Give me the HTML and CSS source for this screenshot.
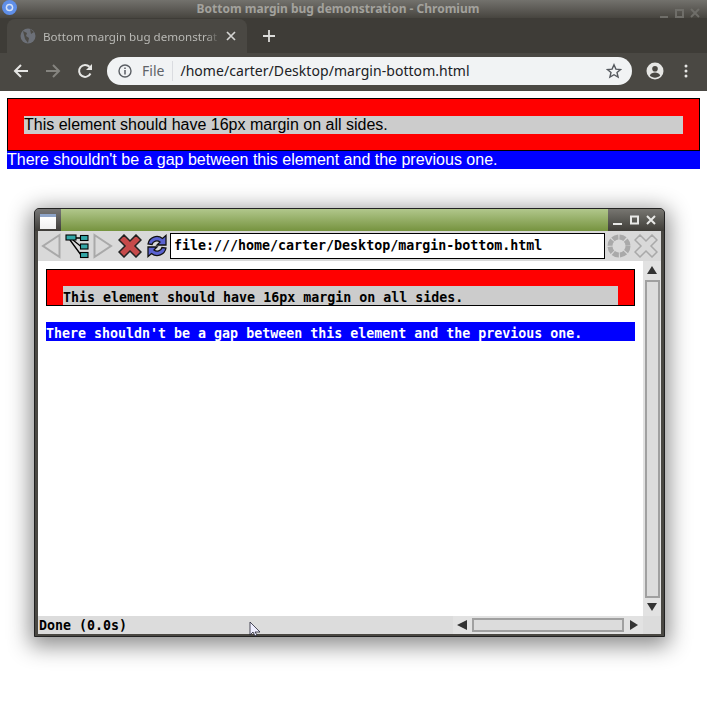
FILE: index.html
```html
<!DOCTYPE html>
<html lang="en">
<head>
<meta charset="utf-8">
<title>Bottom margin bug demonstration - Chromium</title>
<link rel="stylesheet" href="styles.css">
</head>
<body>
<header class="chrome">
  <div class="titlebar">
    <svg class="app-icon" width="18" height="18" viewBox="0 0 18 18"><circle cx="8.500" cy="7.500" r="7.500" fill="#5f8fe8"/><circle cx="8.500" cy="7.500" r="3.800" fill="#d5e2f6"/><circle cx="8.500" cy="7.500" r="2.300" fill="#5f8fe8"/></svg>
    <span class="win-title">Bottom margin bug demonstration - Chromium</span>
    <div class="win-controls">
      <svg width="48" height="12" viewBox="0 0 48 12"><path d="M2 10h8" stroke="#6f6e69" stroke-width="2"/><rect x="18" y="3" width="7" height="7" fill="none" stroke="#6f6e69" stroke-width="2"/><path d="M33 2l8 8M41 2l-8 8" stroke="#6f6e69" stroke-width="2"/></svg>
    </div>
  </div>
  <div class="tabstrip">
    <div class="tab">
      <svg class="globe" width="16" height="16" viewBox="0 0 16 16"><circle cx="8" cy="8" r="7.500" fill="#6c7078"/><path d="M3 3l4 2-1 3 3 2-1 5-3-4zM10 1l4 3-3 2z" fill="#4d4b46"/></svg>
      <span class="tab-label">Bottom margin bug demonstrat</span>
      <svg class="tab-close" width="10" height="10" viewBox="0 0 10 10"><path d="M1 1l8 8M9 1l-8 8" stroke="#d4d4d2" stroke-width="1.700"/></svg>
    </div>
    <svg class="new-tab" width="14" height="14" viewBox="0 0 14 14"><path d="M7 1v12M1 7h12" stroke="#dcdcda" stroke-width="1.800"/></svg>
  </div>
  <div class="toolbar">
    <svg class="nav" width="16" height="16" viewBox="0 0 16 16"><path d="M15 8H2M8 2L2 8l6 6" fill="none" stroke="#e6e6e4" stroke-width="2"/></svg>
    <svg class="nav" width="16" height="16" viewBox="0 0 16 16"><path d="M1 8h13M8 2l6 6-6 6" fill="none" stroke="#85847f" stroke-width="2"/></svg>
    <svg class="nav" width="16" height="16" viewBox="0 0 16 16"><path d="M13.500 10.500A6 6 0 1 1 12.500 3.800" fill="none" stroke="#e6e6e4" stroke-width="2"/><path d="M15 1v6H9z" fill="#e6e6e4"/></svg>
    <div class="omnibox">
      <svg class="info" width="14" height="14" viewBox="0 0 14 14"><circle cx="7" cy="7" r="6" fill="none" stroke="#5a5e63" stroke-width="1.400"/><path d="M7 6v4.500M7 3.500v1.500" stroke="#5a5e63" stroke-width="1.500"/></svg>
      <span class="scheme">File</span>
      <span class="divider"></span>
      <span class="url">/home/carter/Desktop/margin-bottom.html</span>
      <svg class="star" width="16" height="16" viewBox="0 0 16 16"><path d="M8 1.800l1.900 4.300 4.600.4-3.500 3 1.100 4.600L8 11.700l-4.100 2.400L5 9.500l-3.500-3 4.600-.4z" fill="none" stroke="#55595e" stroke-width="1.400"/></svg>
    </div>
    <svg class="avatar" width="18" height="18" viewBox="0 0 18 18"><circle cx="9" cy="9" r="8.500" fill="#e6e6e4"/><circle cx="9" cy="6.800" r="2.800" fill="#4a4843"/><path d="M3.800 13.500c1-2.200 3-3 5.200-3s4.200.8 5.200 3c-1.300 1.400-3.100 2.200-5.200 2.200s-3.900-.8-5.200-2.200z" fill="#4a4843"/></svg>
    <svg class="menu" width="4" height="14" viewBox="0 0 4 14"><circle cx="2" cy="2" r="1.500" fill="#e6e6e4"/><circle cx="2" cy="7" r="1.500" fill="#e6e6e4"/><circle cx="2" cy="12" r="1.500" fill="#e6e6e4"/></svg>
  </div>
</header>

<main class="page">
  <div class="red-box">
    <p class="grey-line">This element should have 16px margin on all sides.</p>
  </div>
  <p class="blue-line">There shouldn't be a gap between this element and the previous one.</p>

  <section class="window">
    <div class="nf-title">
      <div class="nf-icon"><span class="nf-icon-sq"></span></div>
      <div class="nf-green"></div>
      <div class="nf-controls">
        <svg width="50" height="12" viewBox="0 0 50 12"><path d="M5 10h9" stroke="#e8e8e6" stroke-width="2"/><rect x="23" y="2.500" width="7" height="7" fill="none" stroke="#e8e8e6" stroke-width="2"/><path d="M39 2l8 8M47 2l-8 8" stroke="#e8e8e6" stroke-width="2"/></svg>
      </div>
    </div>
    <div class="nf-toolbar">
      <svg class="nf-back" width="20" height="26" viewBox="0 0 20 26"><path d="M18.500 2v22L2 13z" fill="#d9d9d9" stroke="#a9a9a9" stroke-width="2"/></svg>
      <svg class="nf-map" width="24" height="26" viewBox="0 0 24 26"><g stroke="#000" stroke-width="1.300" fill="none"><path d="M8 5h8M8 7l8 6.500M5 7l11 15"/></g><g fill="#34a6a6" stroke="#000" stroke-width="1.100"><rect x="1" y="2" width="10" height="5"/><rect x="15.500" y="2.500" width="7.500" height="5"/><rect x="15.500" y="11" width="7.500" height="5"/><rect x="15.500" y="19.500" width="7.500" height="5"/></g></svg>
      <svg class="nf-fwd" width="20" height="26" viewBox="0 0 20 26"><path d="M1.500 2v22L18 13z" fill="#d9d9d9" stroke="#a9a9a9" stroke-width="2"/></svg>
      <svg class="nf-stop" width="24" height="24" viewBox="0 0 24 24"><path d="M6 1l6 6 6-6 5 5-6 6 6 6-5 5-6-6-6 6-5-5 6-6-6-6z" fill="#c64a4a" stroke="#222" stroke-width="1.500"/></svg>
      <svg class="nf-reload" width="22" height="24" viewBox="0 0 22 24"><path d="M2 10a9 9 0 0 1 14.500-5.500L20 1.500v9.500h-9l3-3a5 5 0 0 0-8 2.500z" fill="#5a62d0" stroke="#111" stroke-width="1.300"/><path d="M20 14a9 9 0 0 1-14.500 5.500L2 22.500V13h9l-3 3a5 5 0 0 0 8-2.500z" fill="#5a62d0" stroke="#111" stroke-width="1.300"/></svg>
      <div class="nf-url">file:///home/carter/Desktop/margin-bottom.html</div>
      <svg class="nf-throbber" width="24" height="24" viewBox="0 0 24 24"><circle cx="12" cy="12" r="9" fill="none" stroke="#a9a9a9" stroke-width="5" stroke-dasharray="6 1.100"/></svg>
      <svg class="nf-close" width="24" height="24" viewBox="0 0 24 24"><path d="M6 1l6 6 6-6 5 5-6 6 6 6-5 5-6-6-6 6-5-5 6-6-6-6z" fill="#d9d9d9" stroke="#a9a9a9" stroke-width="1.500"/></svg>
    </div>
    <div class="nf-middle">
      <div class="nf-view">
        <div class="nf-red">
          <p class="nf-grey">This element should have 16px margin on all sides.</p>
        </div>
        <p class="nf-blue">There shouldn't be a gap between this element and the previous one.</p>
      </div>
      <div class="nf-vscroll">
        <span class="arrow arrow-up"></span>
        <div class="vthumb"></div>
        <span class="arrow arrow-down"></span>
      </div>
    </div>
    <div class="nf-status">
      <span class="status-text">Done (0.0s)</span>
      <div class="nf-hscroll">
        <span class="arrow arrow-left"></span>
        <div class="hthumb"></div>
        <span class="arrow arrow-right"></span>
      </div>
      <div class="corner"></div>
    </div>
    <svg class="cursor" width="13" height="16" viewBox="0 0 13 16"><path d="M1 1v13l3-3 2 4 2-1-2-3h5z" fill="#eef" stroke="#223" stroke-width=".8"/></svg>
  </section>
</main>
</body>
</html>
```

FILE: styles.css
```css
* { box-sizing: border-box; }
html, body { margin: 0; padding: 0; background: #fff; }
body { width: 707px; height: 710px; overflow: hidden; font-family: "Liberation Sans", sans-serif; }
p { margin: 0; }

.chrome { height: 91px; font-family: "Noto Sans", sans-serif; }
.titlebar { height: 18px; display: flex; align-items: center; position: relative; background: linear-gradient(#73726d, #47453f); }
.app-icon { position: absolute; left: 1px; top: 0; }
.win-title { width: 100%; text-align: center; font-size: 12px; font-weight: 700; color: #a3a29d; line-height: 18px; padding-right: 31px; }
.win-controls { position: absolute; right: 1px; top: 2px; height: 14px; }

.tabstrip { height: 35px; background: #3e3c37; display: flex; align-items: center; }
.tab { width: 240px; height: 34px; margin: 1px 0 0 7px; background: #4a4843; border-radius: 8px 8px 0 0; display: flex; align-items: center; padding-left: 13px; }
.globe { flex: none; }
.tab-label { margin-left: 7px; width: 177px; font-size: 11.600px; color: #b9b9b5; white-space: nowrap; -webkit-mask-image: linear-gradient(90deg, #000 92%, transparent); mask-image: linear-gradient(90deg, #000 92%, transparent); }
.tab-close { margin-left: 6px; flex: none; }
.new-tab { margin-left: 15px; }

.toolbar { height: 38px; background: #4a4843; display: flex; align-items: center; padding: 0 0 0 13px; }
.nav { flex: none; margin-right: 16px; margin-top: -3px; }
.omnibox { width: 525px; height: 28px; margin-left: -2px; margin-top: -3px; border-radius: 14px; background: #f1f3f4; display: flex; align-items: center; padding-left: 11px; }
.info { flex: none; }
.scheme { margin-left: 10px; font-size: 14px; color: #5f6368; }
.divider { width: 1px; height: 20px; margin-left: 8px; background: #dadce0; }
.url { margin-left: 7px; font-size: 14px; letter-spacing: .05px; color: #202124; white-space: nowrap; }
.star { margin-left: auto; margin-right: 10px; flex: none; }
.avatar { margin-left: 14px; margin-top: -3px; flex: none; }
.menu { margin-left: 20px; margin-top: -3px; flex: none; }

.page { padding: 7px; font-size: 16px; line-height: 18px; }
.red-box { width: 693px; height: 53px; padding: 17px 16px 0 16px; background: #f00; border: 1px solid #000; }
.grey-line { height: 18px; background: #ccc; color: #000; }
.blue-line { width: 693px; height: 18px; background: #00f; color: #fff; }

.window { position: relative; width: 631px; height: 429px; margin: 39px 0 0 27px; padding-bottom: 2px; display: flex; flex-direction: column; background: #4a4843; border: 1px solid #222; border-radius: 5px 5px 0 0; box-shadow: 0 5px 22px 4px rgba(0,0,0,.45); }
.nf-title { height: 22px; display: flex; flex: none; border-radius: 4px 4px 0 0; overflow: hidden; }
.nf-icon { width: 26px; background: linear-gradient(#777, #3e3c38); padding: 5px 0 0 5px; }
.nf-icon-sq { display: block; width: 16px; height: 15px; background: linear-gradient(#8ea4c8 0, #8ea4c8 3px, #fff 3px, #f0f0f0); }
.nf-green { flex: 1; background: linear-gradient(#b1c78c, #76933f); }
.nf-controls { width: 56px; background: linear-gradient(#777671, #3f3d38); padding-top: 5px; }
.nf-controls svg { display: block; }

.nf-toolbar { height: 30px; flex: none; margin: 0 3px; display: flex; align-items: center; background: #d9d9d9; padding-left: 3px; }
.nf-back { flex: none; }
.nf-map { margin-left: 4px; flex: none; }
.nf-fwd { margin-left: 4px; flex: none; }
.nf-stop { margin-left: 5px; flex: none; }
.nf-reload { margin-left: 4px; flex: none; }
.nf-url { width: 435px; height: 26px; margin-left: 2px; flex: none; background: #fff; border: 1px solid #000; padding-left: 3px; font: 700 13.300px/24px "DejaVu Sans Mono", monospace; color: #000; white-space: nowrap; overflow: hidden; }
.nf-throbber { margin-left: 2px; flex: none; }
.nf-close { margin-left: 3px; flex: none; }

.nf-middle { flex: 1; display: flex; margin: 0 3px; min-height: 0; }
.nf-view { width: 605px; background: #fff; padding: 8px; font: 700 13.300px/18px "DejaVu Sans Mono", monospace; }
.nf-red { width: 589px; height: 37px; padding: 16px 16px 0 16px; background: #f00; border: 1px solid #000; }
.nf-grey { height: 19px; padding-top: 3px; background: #ccc; color: #000; overflow: hidden; }
.nf-blue { width: 589px; height: 19px; margin-top: 16px; padding-top: 3px; background: #00f; color: #fff; white-space: nowrap; overflow: hidden; }
.nf-vscroll { flex: 1; background: #e2e2e2; display: flex; flex-direction: column; align-items: center; padding-top: 5px; }
.vthumb { width: 15px; height: 318px; margin: 6px 0 5px; background: #dcdcdc; border: 2px solid #a0a0a0; }

.arrow { display: block; width: 0; height: 0; flex: none; border-style: solid; border-color: transparent; }
.arrow-up { border-width: 0 5px 8px; border-bottom-color: #333; }
.arrow-down { border-width: 8px 5px 0; border-top-color: #333; }
.arrow-left { border-width: 5px 10px 5px 0; border-right-color: #333; }
.arrow-right { border-width: 5px 0 5px 8px; border-left-color: #333; }

.nf-status { height: 18px; flex: none; margin: 0 3px; display: flex; align-items: center; background: #dcdcdc; font: 700 13.300px/18px "DejaVu Sans Mono", monospace; color: #000; }
.status-text { width: 415px; padding: 2px 0 0 1px; }
.nf-hscroll { width: 190px; height: 18px; flex: none; display: flex; align-items: center; background: #e2e2e2; padding-left: 4px; }
.hthumb { width: 152px; height: 14px; margin: 0 6px 0 5px; flex: none; background: #dcdcdc; border: 2px solid #a0a0a0; }
.corner { flex: 1; height: 18px; background: #dcdcdc; }
.cursor { position: absolute; left: 214px; top: 412px; }
```
